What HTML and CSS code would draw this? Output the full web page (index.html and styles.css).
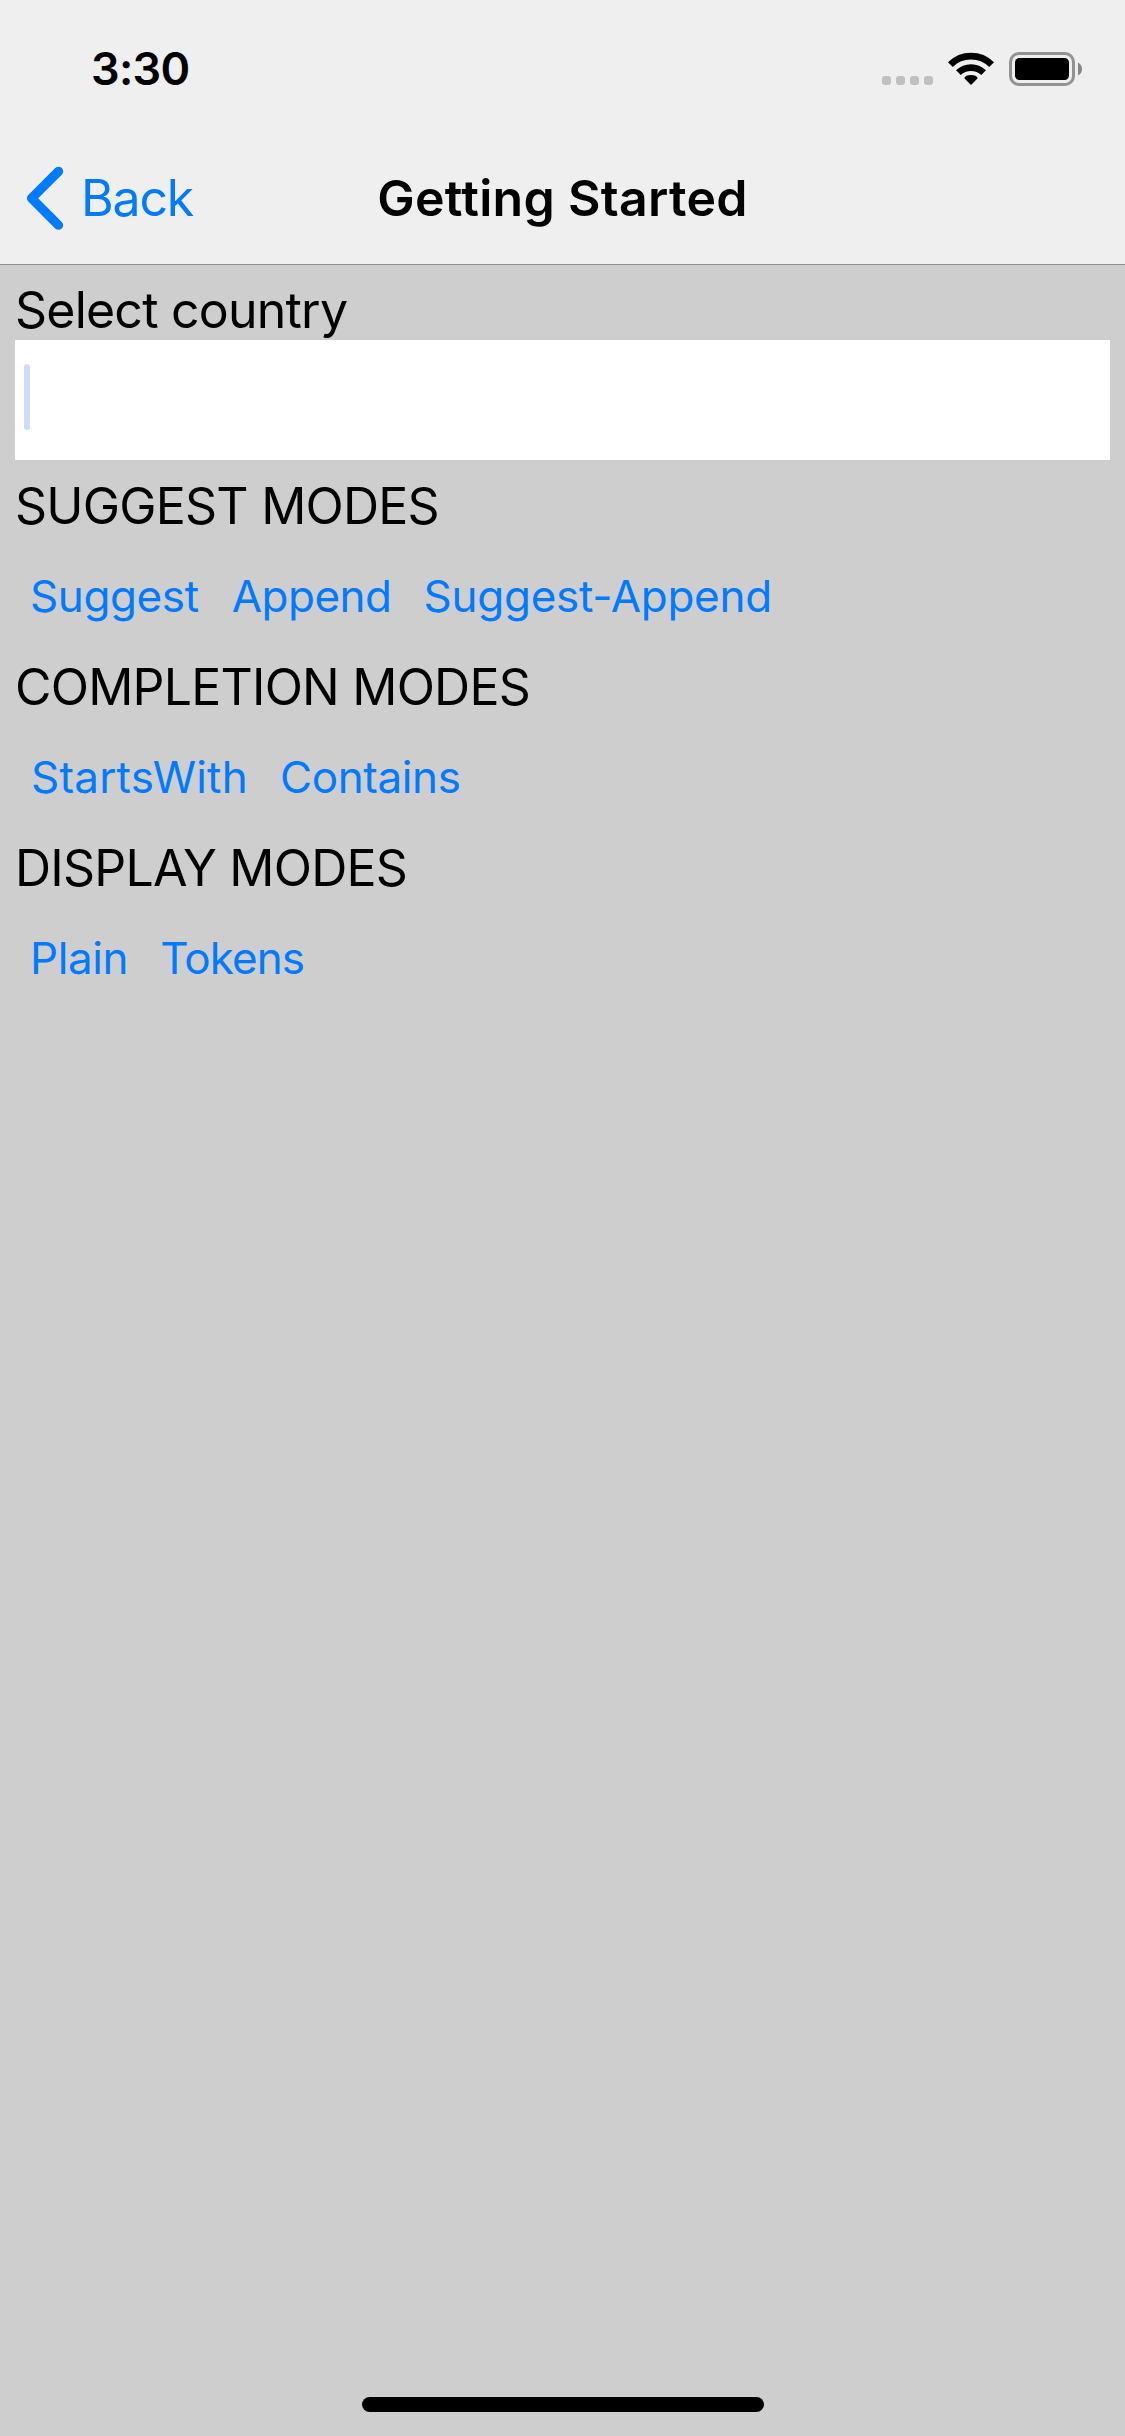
FILE: index.html
```html
<!DOCTYPE html>
<html lang="en">
<head>
<meta charset="utf-8">
<title>Getting Started</title>
<link rel="stylesheet" href="styles.css">
</head>
<body>
<div class="screen">
  <header class="header">
    <div class="status">
      <span class="time">3:30</span>
      <div class="indicators">
        <svg class="signal" width="51" height="34" viewBox="0 0 51 34" fill="#c0c0c0">
          <rect x="0" y="24" width="9" height="9" rx="3"/>
          <rect x="14" y="24" width="9" height="9" rx="3"/>
          <rect x="28" y="24" width="9" height="9" rx="3"/>
          <rect x="42" y="24" width="9" height="9" rx="3"/>
        </svg>
        <svg class="wifi" width="46" height="34" viewBox="0 0 46 34">
          <path d="M2.4 12.6A29.3 29.3 0 0 1 43.6 12.6" fill="none" stroke="#000" stroke-width="6.8"/>
          <path d="M10.4 20.6A18.2 18.2 0 0 1 35.6 20.6" fill="none" stroke="#000" stroke-width="6.8"/>
          <path d="M23 33 16.3 26.3Q17.5 23 23 23T29.7 26.3Z"/>
        </svg>
        <svg class="battery" width="74" height="34" viewBox="0 0 74 34">
          <rect x="1.5" y="1.5" width="63" height="31" rx="8.5" fill="none" stroke="#929292" stroke-width="3"/>
          <rect x="6" y="6" width="54" height="22" rx="4.5"/>
          <path d="M69 10.5Q73 12.5 73 17T69 23.5Z" fill="#858585"/>
        </svg>
      </div>
    </div>
    <nav class="nav">
      <a class="back">
        <svg class="chevron" width="38" height="64" viewBox="0 0 38 64">
          <path d="M32.5 5.4 5.6 32.3 32.5 59.2" fill="none" stroke="#007aff" stroke-width="9.3" stroke-linecap="round" stroke-linejoin="round"/>
        </svg>
        <span>Back</span>
      </a>
      <h1 class="title">Getting Started</h1>
    </nav>
  </header>
  <main class="content">
    <div class="label">Select country</div>
    <div class="field"><span class="caret"></span></div>
    <h2 class="label">SUGGEST MODES</h2>
    <div class="row">
      <a class="option">Suggest</a>
      <a class="option append">Append</a>
      <a class="option suggest-append">Suggest-Append</a>
    </div>
    <h2 class="label">COMPLETION MODES</h2>
    <div class="row">
      <a class="option starts-with">StartsWith</a>
      <a class="option">Contains</a>
    </div>
    <h2 class="label">DISPLAY MODES</h2>
    <div class="row">
      <a class="option">Plain</a>
      <a class="option tokens">Tokens</a>
    </div>
  </main>
  <div class="home-indicator"></div>
</div>
</body>
</html>
```
FILE: styles.css
```css
* {
  box-sizing: border-box;
}

body {
  margin: 0;
  font-family: Inter, "Liberation Sans", sans-serif;
  color: #000;
  background: #cecece;
}

.screen {
  display: flex;
  flex-direction: column;
  height: 2436px;
  padding-bottom: 24px;
}

.header {
  height: 265px;
  background: #efefef;
  border-bottom: 1px solid #8f8f8f;
}

.status {
  display: flex;
  justify-content: space-between;
  height: 132px;
  padding: 39px 42px 0 91px;
}

.time {
  font-size: 45px;
  font-weight: 600;
  line-height: 60px;
  letter-spacing: -0.7px;
}

.indicators {
  display: flex;
  height: 34px;
  margin-top: 13px;
}

.wifi {
  margin-left: 15px;
}

.battery {
  margin-left: 15px;
}

.nav {
  display: grid;
  grid-template-columns: 1fr auto 1fr;
  align-items: center;
  height: 132px;
  padding: 0 26px;
}

.back {
  display: flex;
  align-items: center;
  color: #007aff;
  font-size: 50px;
  letter-spacing: -1.2px;
}

.back span {
  margin-left: 17px;
}

.title {
  margin: 0;
  font-size: 50px;
  font-weight: 600;
  letter-spacing: 0.29px;
}

.content {
  flex: 1;
  padding: 15px 15px 0;
}

.label {
  margin: 0;
  font-size: 50px;
  font-weight: 400;
  line-height: 60px;
  letter-spacing: -0.78px;
}

.field {
  display: flex;
  align-items: flex-start;
  height: 120px;
  margin-bottom: 16px;
  padding: 24px 9px;
  background: #fff;
}

.caret {
  width: 6px;
  height: 66px;
  border-radius: 3px;
  background: #d0dafa;
}

.row {
  display: flex;
  align-items: center;
  gap: 32px;
  height: 121px;
  padding: 0 0 2px 15px;
}

.option {
  color: #007aff;
  font-size: 44px;
  line-height: 60px;
  letter-spacing: -0.4px;
}

.append {
  margin-left: 1px;
  letter-spacing: -0.5px;
}

.suggest-append {
  letter-spacing: -0.28px;
}

.starts-with {
  margin-left: 1px;
  letter-spacing: 0.2px;
}

.tokens {
  letter-spacing: -0.9px;
}

.home-indicator {
  width: 402px;
  height: 15px;
  margin: 0 auto;
  border-radius: 8px;
  background: #000;
}
```
